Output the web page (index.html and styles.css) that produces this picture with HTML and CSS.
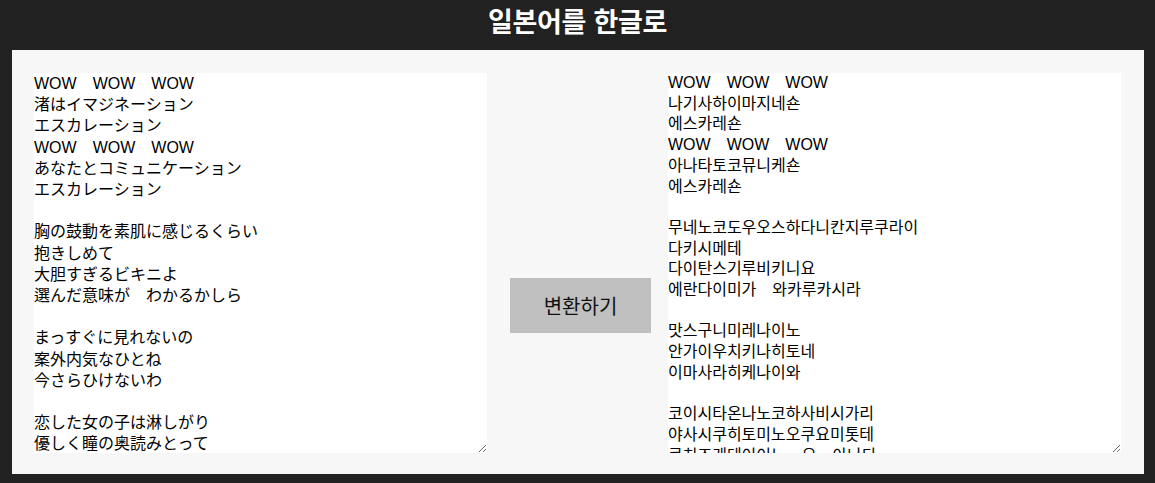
FILE: index.html
```html
<!DOCTYPE html>
<html lang="ko">
<head>
<meta charset="utf-8">
<title>일본어를 한글로</title>
<link rel="stylesheet" href="styles.css">
</head>
<body>
<header class="top">
  <h1 class="title">일본어를 한글로</h1>
</header>
<main class="panel">
  <textarea class="box box-ja" spellcheck="false">WOW　WOW　WOW
渚はイマジネーション
エスカレーション
WOW　WOW　WOW
あなたとコミュニケーション
エスカレーション

胸の鼓動を素肌に感じるくらい
抱きしめて
大胆すぎるビキニよ
選んだ意味が　わかるかしら

まっすぐに見れないの
案外内気なひとね
今さらひけないわ

恋した女の子は淋しがり
優しく瞳の奥読みとって
口づけでいいの　よ　あなた</textarea>
  <button class="convert" type="button">변환하기</button>
  <textarea class="box box-ko" spellcheck="false">WOW　WOW　WOW
나기사하이마지네숀
에스카레숀
WOW　WOW　WOW
아나타토코뮤니케숀
에스카레숀

무네노코도우오스하다니칸지루쿠라이
다키시메테
다이탄스기루비키니요
에란다이미가　와카루카시라

맛스구니미레나이노
안가이우치키나히토네
이마사라히케나이와

코이시타온나노코하사비시가리
야사시쿠히토미노오쿠요미톳테
쿠치즈케데이이노　요　아나타</textarea>
</main>
</body>
</html>
```

FILE: styles.css
```css
html, body {
  margin: 0;
  padding: 0;
  background: #212121;
}

body {
  width: 1155px;
  height: 483px;
  overflow: hidden;
}

.top {
  height: 50px;
  display: flex;
  justify-content: center;
  align-items: flex-start;
}

.title {
  margin: 0;
  padding-top: 3px;
  color: #ffffff;
  font-family: "Noto Sans CJK KR", "Noto Sans", sans-serif;
  font-weight: 700;
  font-size: 27px;
  line-height: 36px;
  letter-spacing: -0.3px;
}

.panel {
  margin: 0 11px 0 12px;
  background: #f7f7f7;
  padding: 23px 23px 21px 22px;
  display: flex;
  align-items: flex-start;
}

.box {
  width: 453px;
  height: 380px;
  margin: 0;
  padding: 0;
  border: none;
  outline: none;
  background: #ffffff;
  color: #000000;
  font-size: 16px;
  overflow: hidden;
  resize: both;
  white-space: pre;
  box-sizing: border-box;
}

.box-ja {
  font-family: "Liberation Sans", "Noto Sans CJK JP", sans-serif;
  line-height: 21.2px;
}

.box-ko {
  font-family: "Liberation Sans", "Noto Sans CJK KR", sans-serif;
  line-height: 20.7px;
}

.convert {
  width: 141px;
  height: 55px;
  margin: 205px 17px 0 23px;
  padding: 0;
  border: none;
  background: #c0c0c0;
  color: #111111;
  font-family: "Noto Sans CJK KR", "Noto Sans", sans-serif;
  font-size: 20px;
  cursor: pointer;
}
```
